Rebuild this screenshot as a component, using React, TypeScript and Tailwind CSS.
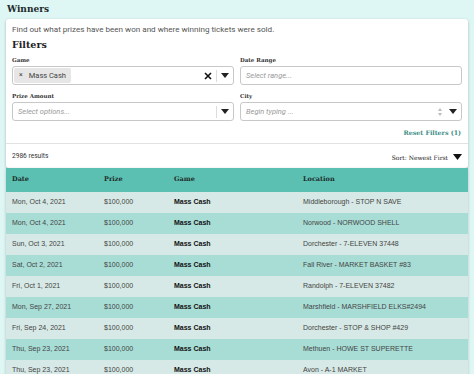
import React from "react";

const rows = [
  ["Mon, Oct 4, 2021", "Middleborough - STOP N SAVE"],
  ["Mon, Oct 4, 2021", "Norwood - NORWOOD SHELL"],
  ["Sun, Oct 3, 2021", "Dorchester - 7-ELEVEN 37448"],
  ["Sat, Oct 2, 2021", "Fall River - MARKET BASKET #83"],
  ["Fri, Oct 1, 2021", "Randolph - 7-ELEVEN 37482"],
  ["Mon, Sep 27, 2021", "Marshfield - MARSHFIELD ELKS#2494"],
  ["Fri, Sep 24, 2021", "Dorchester - STOP & SHOP #429"],
  ["Thu, Sep 23, 2021", "Methuen - HOWE ST SUPERETTE"],
  ["Thu, Sep 23, 2021", "Avon - A-1 MARKET"],
];

const serif = "font-['DejaVu_Serif',serif]";

function Caret() {
  return (
    <svg width="8" height="5" viewBox="0 0 8 5">
      <path d="M0 0h8L4 5z" fill="#222" />
    </svg>
  );
}

function Label({ children }: { children: React.ReactNode }) {
  return <div className={`${serif} text-[5.5px] font-bold text-[#333] leading-[8px] mb-[2px]`}>{children}</div>;
}

export default function App() {
  return (
    <div className="min-h-screen bg-[#def6f4] font-['Roboto',sans-serif] px-[6px] overflow-hidden h-[374px]">
      <h1 className={`${serif} text-[9px] font-bold text-[#1d2b2a] leading-[18px] pl-[1px]`}>Winners</h1>
      <div className="bg-white rounded-[3px] shadow-[0_1px_3px_rgba(0,0,0,0.25)] mt-[1px] px-[6px] pt-[5px]">
        <p className="text-[8.1px] text-[#555] leading-[10px]">
          Find out what prizes have been won and where winning tickets were sold.
        </p>
        <h2 className={`${serif} text-[9.5px] font-bold text-[#222] leading-[14px] mt-[4px]`}>Filters</h2>
        <div className="grid grid-cols-2 gap-x-[6px] gap-y-[7px] mt-[4px]">
          <div>
            <Label>Game</Label>
            <div className="h-[19px] border border-[#c8c8c8] rounded-[3px] flex items-center pl-[1px]">
              <div className="h-[15px] bg-[#e6e6e6] rounded-[2px] flex items-center px-[5px] gap-[6px] text-[7.5px] text-[#444]">
                <span className="text-[7px]">×</span>
                <span>Mass Cash</span>
              </div>
              <div className="flex-1" />
              <svg width="8" height="8" viewBox="0 0 8 8" className="mr-[4px]">
                <path d="M1 1l6 6M7 1l-6 6" stroke="#111" strokeWidth="1.6" />
              </svg>
              <div className="w-px h-[12px] bg-[#ddd]" />
              <div className="px-[4px] flex items-center"><Caret /></div>
            </div>
          </div>
          <div>
            <Label>Date Range</Label>
            <div className="h-[19px] border border-[#c8c8c8] rounded-[3px] flex items-center px-[5px] text-[7.5px] italic text-[#999]">
              Select range...
            </div>
          </div>
          <div>
            <Label>Prize Amount</Label>
            <div className="h-[19px] border border-[#c8c8c8] rounded-[3px] flex items-center pl-[5px] text-[7.5px] italic text-[#999]">
              <span className="flex-1">Select options...</span>
              <div className="w-px h-[12px] bg-[#ddd]" />
              <div className="px-[4px] flex items-center"><Caret /></div>
            </div>
          </div>
          <div>
            <Label>City</Label>
            <div className="h-[19px] border border-[#c8c8c8] rounded-[3px] flex items-center pl-[5px] text-[7.5px] italic text-[#999]">
              <span className="flex-1">Begin typing ...</span>
              <div className="flex flex-col items-center gap-[2px] mr-[3px]">
                <svg width="4" height="3" viewBox="0 0 4 3"><path d="M0 3L2 0l2 3z" fill="#bbb" /></svg>
                <svg width="4" height="3" viewBox="0 0 4 3"><path d="M0 0h4L2 3z" fill="#bbb" /></svg>
              </div>
              <div className="px-[4px] flex items-center"><Caret /></div>
            </div>
          </div>
        </div>
        <div className={`${serif} text-right text-[6.3px] font-bold text-[#3a8d84] leading-[10px] mt-[7px] pr-[1px]`}>
          Reset Filters (1)
        </div>
        <div className="border-t border-[#e2e2e2] mt-[5px] -mx-[6px]" />
        <div className="flex items-center justify-between h-[24px] text-[6.6px] text-[#333] pt-[2px]">
          <span>2986 results</span>
          <span className={`${serif} flex items-center gap-[5px] text-[6px] text-[#222]`}>
            <span>Sort: Newest First</span>
            <svg width="9" height="6" viewBox="0 0 9 6"><path d="M0 0h9L4.5 6z" fill="#111" /></svg>
          </span>
        </div>
      </div>
      <table className="w-full border-collapse font-['Liberation_Sans',Arial,sans-serif] text-[7px] text-[#444] shadow-[0_1px_3px_rgba(0,0,0,0.2)]">
        <thead>
          <tr className={`bg-[#5bc0b2] h-[24px] ${serif} text-[6.5px] font-bold text-[#1e2d2b] text-left`}>
            <th className="pl-[6px] w-[98px] font-bold">Date</th>
            <th className="w-[70px] font-bold">Prize</th>
            <th className="w-[129px] font-bold">Game</th>
            <th className="font-bold">Location</th>
          </tr>
        </thead>
        <tbody>
          {rows.map(([date, loc], i) => (
            <tr key={i} className={`h-[21px] ${i % 2 === 0 ? "bg-[#d7e9e6]" : "bg-[#a8ddd6]"}`}>
              <td className="pl-[6px]">{date}</td>
              <td>$100,000</td>
              <td className="font-bold text-[#111]">Mass Cash</td>
              <td>{loc}</td>
            </tr>
          ))}
        </tbody>
      </table>
    </div>
  );
}
